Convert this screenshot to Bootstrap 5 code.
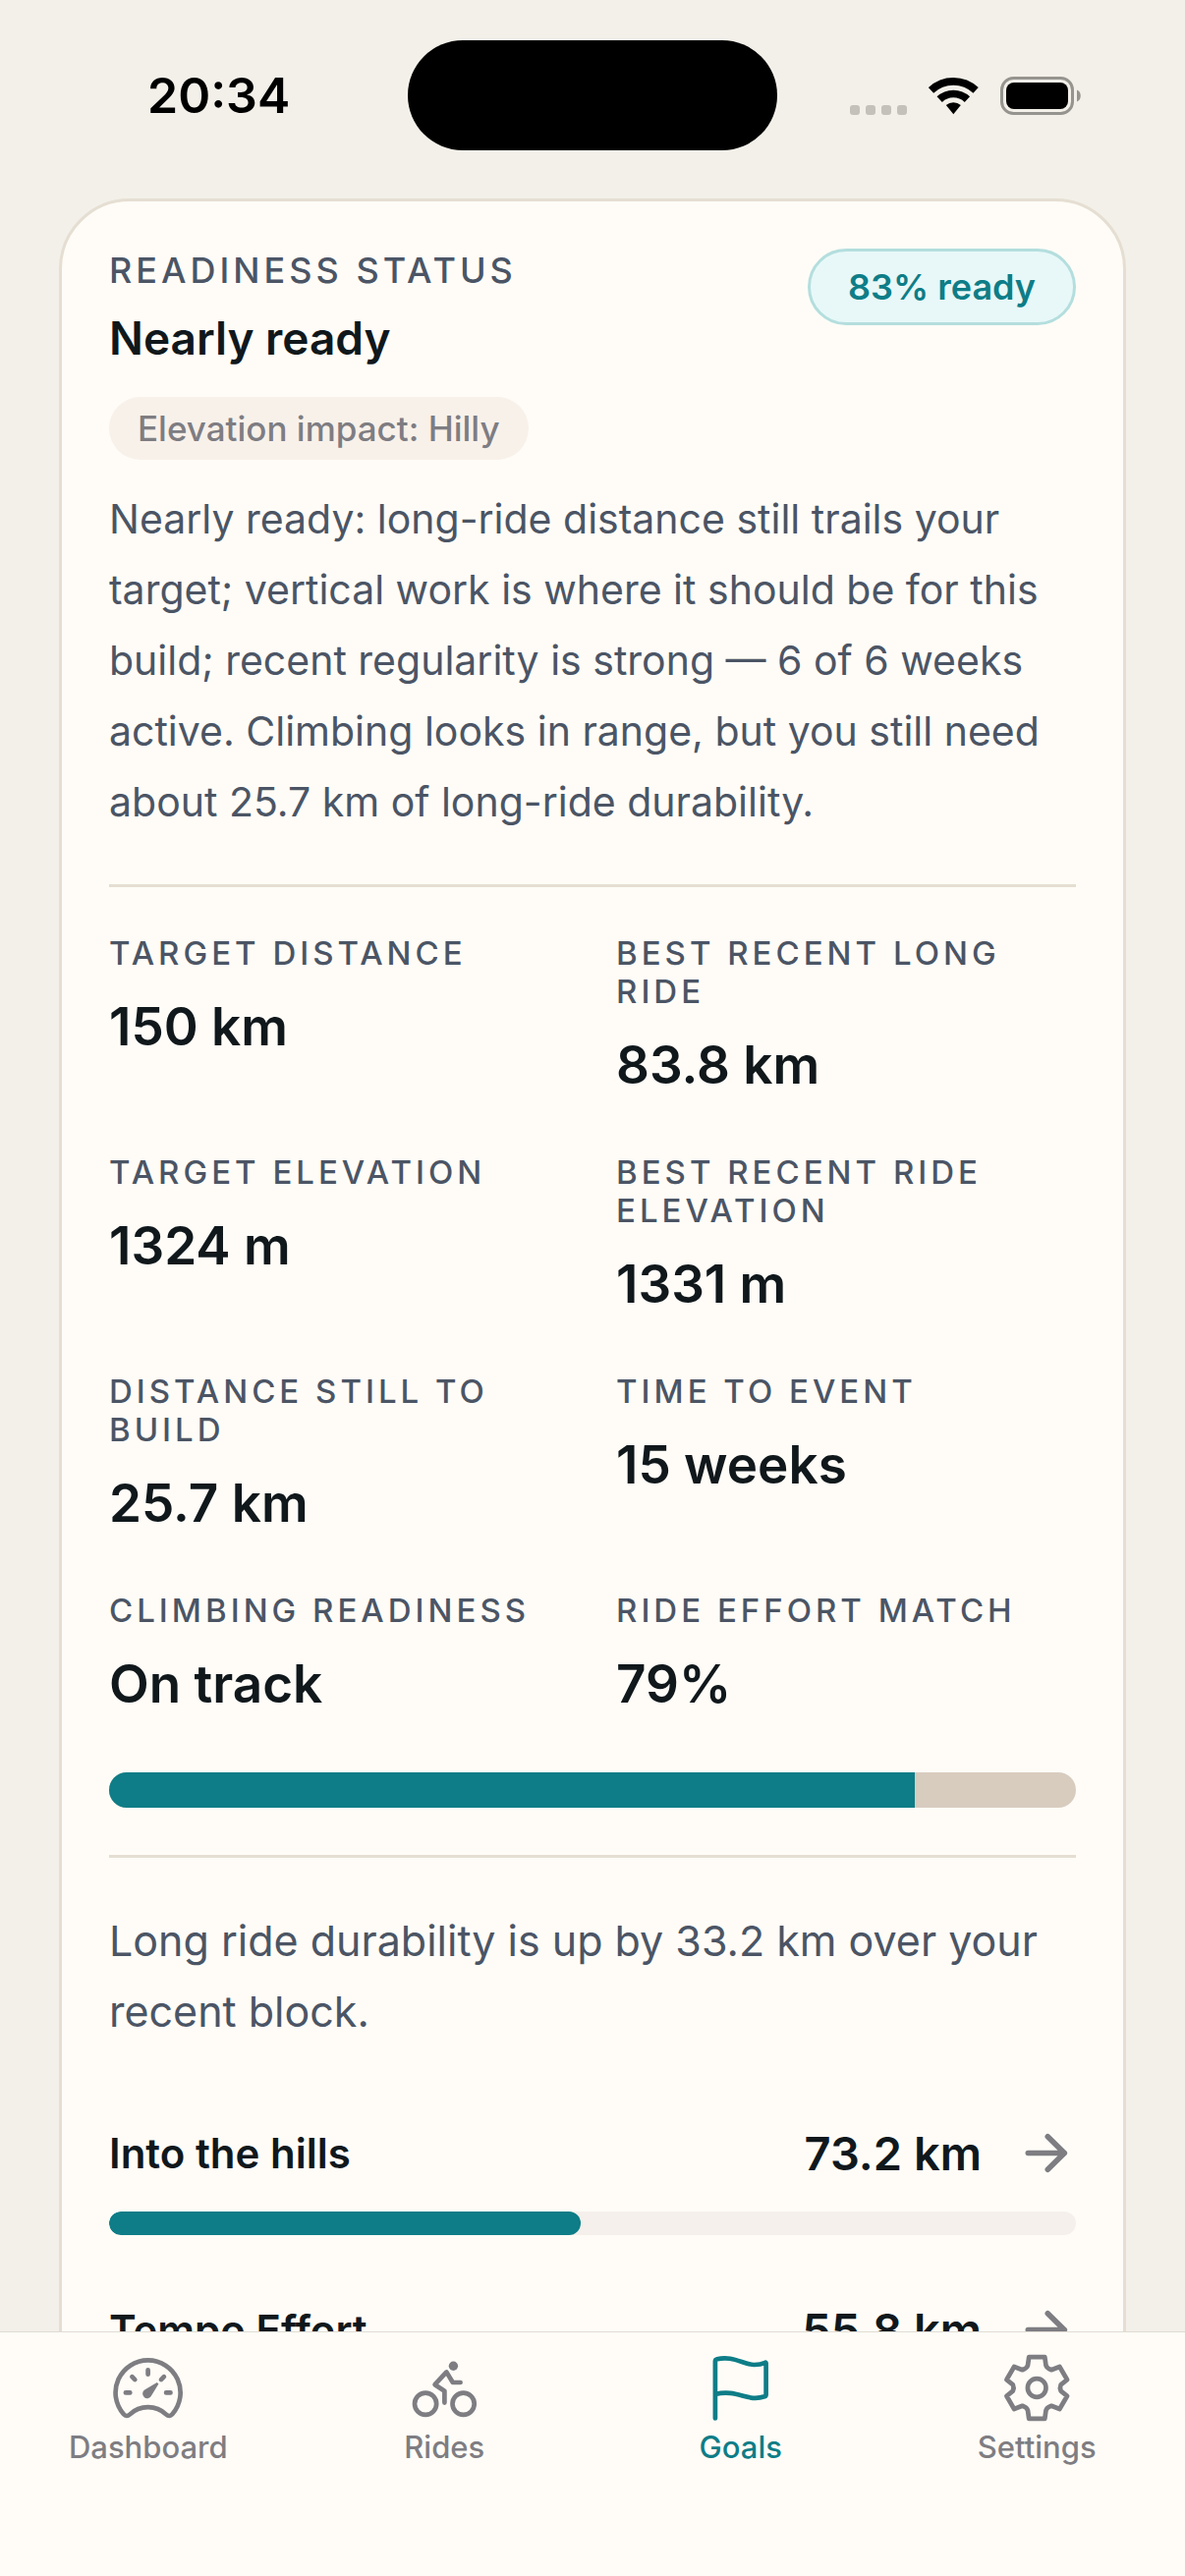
<!DOCTYPE html>
<html lang="en">
<head>
<meta charset="utf-8">
<meta name="viewport" content="width=device-width, initial-scale=1">
<title>Goals</title>
<link href="https://cdn.jsdelivr.net/npm/bootstrap@5.3.0/dist/css/bootstrap.min.css" rel="stylesheet">
<style>
:root{--sand:#f3f0e9;--paper:#fffcf7;--line:#e5ded2;--teal:#0e7d87;--ink:#10181c;--slate:#4b5565;--muted:#7e7d82}
body{font-family:Inter,"Liberation Sans",sans-serif;background:var(--sand);color:var(--ink)}
svg{display:block;flex:none}
.status-bar{padding:41px 106px 49px 150px}
.clock{font-size:50px;line-height:60px;font-weight:600;color:#000}
.island{width:376px;height:112px;background:#000;margin-left:-44px}
.signal{gap:22px}
.signal-dots{gap:6px;align-self:flex-end}
.signal-dots span{width:10px;height:10px;border-radius:3px;background:#c4c1bb}
.scroll-area{min-height:0;overflow-y:auto;scrollbar-width:none}
.scroll-area::-webkit-scrollbar{display:none}
.goal-card{--bs-card-bg:var(--paper);--bs-card-color:var(--ink);margin:0 60px 60px;border:3px solid var(--line);border-radius:72px}
.goal-card>.card-body{padding:48px}
.eyebrow{font-size:36px;line-height:45px;font-weight:500;letter-spacing:4px;color:var(--slate);text-transform:uppercase;margin-bottom:11px}
.goal-title{font-size:46px;line-height:71px;font-weight:600;margin:0}
.ready-pill{font-size:36px;line-height:42px;font-weight:600;color:var(--teal);background:#e8f8f8;border:3px solid #b4dede;padding:15px 38px}
.impact-pill{font-size:35px;line-height:40px;font-weight:500;color:var(--muted);background:#f8f1ea;padding:12px 29px}
.summary{font-size:41px;line-height:72px;color:var(--slate);margin:24px 0 0}
.rule{height:3px;border:0;background:var(--line);opacity:1;margin:48px 0}
.metrics{--bs-gutter-x:48px;--bs-gutter-y:52px;margin-bottom:52px}
.metric-label{font-size:33px;line-height:39px;font-weight:500;letter-spacing:4px;color:var(--slate);text-transform:uppercase;margin-bottom:18px}
.metric-value{font-size:53px;line-height:75px;font-weight:600;margin:0}
.progress{--bs-progress-bar-bg:var(--teal)}
.overall{--bs-progress-height:36px;--bs-progress-bg:#d8ccbf;border-radius:18px}
.insight{font-size:43px;line-height:72px;color:var(--slate);margin-bottom:74px}
.rides{gap:62px}
.ride-row{height:70px;gap:36px;color:var(--ink)}
.ride-name{font-size:42px;line-height:60px;font-weight:600}
.ride-km{font-size:47px;line-height:60px;font-weight:600}
.ride-bar{--bs-progress-height:24px;--bs-progress-bg:#f5f0eb;border-radius:12px;margin-top:24px}
.ride-bar .progress-bar{border-radius:12px}
.arrow{color:var(--muted)}
.tab-bar{background:var(--paper);border-top:1px solid #e0dcd5;padding:21px 0 112px}
.tab-bar .nav-link{padding:0;gap:5px;color:var(--muted);font-size:31px;line-height:38px;font-weight:500}
.tab-bar .nav-link.active{color:var(--teal)}
</style>
</head>
<body>
<div class="d-flex flex-column vh-100">

  <header class="status-bar d-flex align-items-center">
    <div class="clock flex-fill w-25">20:34</div>
    <div class="island rounded-pill flex-shrink-0"></div>
    <div class="signal d-flex align-items-center justify-content-end flex-fill w-25">
      <div class="signal-dots d-flex"><span></span><span></span><span></span><span></span></div>
      <svg width="51" height="39" viewBox="0 0 51 39" fill="none" stroke="#000" stroke-width="7.7" aria-label="Wi-Fi">
        <path d="M2.5 13.9A33.2 33.2 0 0 1 48.1 13.9M11.2 23.1A20.5 20.5 0 0 1 39.4 23.1"/>
        <path d="M25.3 38.2L17.8 29A11.7 11.7 0 0 1 32.8 29Z" fill="#000" stroke="none"/>
      </svg>
      <svg width="82" height="39" viewBox="0 0 82 39" aria-label="Battery">
        <rect x="1.5" y="1.5" width="72" height="36" rx="12" fill="none" stroke="#96948f" stroke-width="3"/>
        <rect x="6" y="6" width="63" height="27" rx="8"/>
        <path d="M78 13.5C83 15 83 24 78 25.5Z" fill="#96948f"/>
      </svg>
    </div>
  </header>

  <main class="scroll-area flex-grow-1">
    <section class="card goal-card">
      <div class="card-body">
        <div class="d-flex justify-content-between align-items-start">
          <div>
            <div class="eyebrow">Readiness status</div>
            <h1 class="goal-title">Nearly ready</h1>
          </div>
          <span class="ready-pill rounded-pill">83% ready</span>
        </div>
        <div class="d-flex mt-4"><span class="impact-pill rounded-pill">Elevation impact: Hilly</span></div>
        <p class="summary">Nearly ready: long-ride distance still trails your target; vertical work is where it should be for this build; recent regularity is strong — 6 of 6 weeks active. Climbing looks in range, but you still need about 25.7 km of long-ride durability.</p>

        <hr class="rule">

        <dl class="metrics row row-cols-2">
          <div class="col"><dt class="metric-label">Target distance</dt><dd class="metric-value">150 km</dd></div>
          <div class="col"><dt class="metric-label">Best recent long ride</dt><dd class="metric-value">83.8 km</dd></div>
          <div class="col"><dt class="metric-label">Target elevation</dt><dd class="metric-value">1324 m</dd></div>
          <div class="col"><dt class="metric-label">Best recent ride elevation</dt><dd class="metric-value">1331 m</dd></div>
          <div class="col"><dt class="metric-label">Distance still to build</dt><dd class="metric-value">25.7 km</dd></div>
          <div class="col"><dt class="metric-label">Time to event</dt><dd class="metric-value">15 weeks</dd></div>
          <div class="col"><dt class="metric-label">Climbing readiness</dt><dd class="metric-value">On track</dd></div>
          <div class="col"><dt class="metric-label">Ride effort match</dt><dd class="metric-value">79%</dd></div>
        </dl>

        <div class="progress overall" role="progressbar" aria-label="Readiness" aria-valuenow="83" aria-valuemin="0" aria-valuemax="100">
          <div class="progress-bar" style="width:83.3%"></div>
        </div>

        <hr class="rule">

        <p class="insight">Long ride durability is up by 33.2 km over your recent block.</p>

        <div class="rides d-flex flex-column">
          <div>
            <a href="#" class="ride-row d-flex align-items-center text-decoration-none">
              <span class="ride-name me-auto">Into the hills</span>
              <span class="ride-km">73.2 km</span>
              <svg class="arrow" width="60" height="60" viewBox="0 0 60 60" fill="none" stroke="currentColor" stroke-width="5.6" stroke-linecap="round" stroke-linejoin="round"><path d="M11.3 29.5H48.3M31.3 12.7L48.3 29.5L31.3 46.3"/></svg>
            </a>
            <div class="progress ride-bar" role="progressbar" aria-label="Into the hills" aria-valuenow="73.2" aria-valuemin="0" aria-valuemax="150">
              <div class="progress-bar" style="width:48.8%"></div>
            </div>
          </div>
          <div>
            <a href="#" class="ride-row d-flex align-items-center text-decoration-none">
              <span class="ride-name me-auto">Tempo Effort</span>
              <span class="ride-km">55.8 km</span>
              <svg class="arrow" width="60" height="60" viewBox="0 0 60 60" fill="none" stroke="currentColor" stroke-width="5.6" stroke-linecap="round" stroke-linejoin="round"><path d="M11.3 29.5H48.3M31.3 12.7L48.3 29.5L31.3 46.3"/></svg>
            </a>
            <div class="progress ride-bar" role="progressbar" aria-label="Tempo Effort" aria-valuenow="55.8" aria-valuemin="0" aria-valuemax="150">
              <div class="progress-bar" style="width:37.2%"></div>
            </div>
          </div>
        </div>
      </div>
    </section>
  </main>

  <nav class="tab-bar nav nav-justified flex-nowrap">
    <a class="nav-link nav-item d-flex flex-column align-items-center" href="#">
      <svg width="72" height="72" viewBox="0 0 72 72" fill="none" stroke="currentColor" stroke-width="4.7" stroke-linecap="round" stroke-linejoin="round">
        <path d="M35.6 7.4A33 33 0 0 0 10.8 62.2Q13.8 65.6 17 62.6A27 27 0 0 1 54.2 62.6Q57.4 65.6 60.4 62.2A33 33 0 0 0 35.6 7.4Z"/>
        <path d="M35.6 17.3V21.7M12.9 40.4H17.3M54.1 40.4H58.5M19.4 24.2L22.3 27.1M51.9 24.2L49 27.1"/>
        <path d="M44.8 29.9L46.4 31.4L39.2 43.2A4.7 4.7 0 1 1 32.2 37.6Z" fill="currentColor" stroke="none"/>
      </svg>
      <span>Dashboard</span>
    </a>
    <a class="nav-link nav-item d-flex flex-column align-items-center" href="#">
      <svg width="72" height="72" viewBox="0 0 72 72" fill="none" stroke="currentColor" stroke-width="4.7" stroke-linecap="round" stroke-linejoin="round">
        <circle cx="17.1" cy="51.7" r="11.1"/><circle cx="55.6" cy="51.7" r="11.1"/>
        <circle cx="45.4" cy="13.3" r="4.7" fill="currentColor" stroke="none"/>
        <path d="M52.6 30H44.8L38.4 19.4L26.6 32.2L36.4 38.8V50.6"/>
      </svg>
      <span>Rides</span>
    </a>
    <a class="nav-link nav-item active d-flex flex-column align-items-center" href="#" aria-current="page">
      <svg width="72" height="72" viewBox="0 0 72 72" fill="none" stroke="currentColor" stroke-width="4.7" stroke-linecap="round" stroke-linejoin="round">
        <path d="M9.9 66.4V8.6Q9.9 6.8 11.8 6.3C27 2.2 39 11.8 49.6 12Q56 12 60.8 9.8Q61.6 9.5 61.6 10.4V42.2Q61.6 43.8 60.2 44.3C42.5 50.5 33 36.5 9.9 42"/>
      </svg>
      <span>Goals</span>
    </a>
    <a class="nav-link nav-item d-flex flex-column align-items-center" href="#">
      <svg width="72" height="72" viewBox="0 0 72 72" fill="none" stroke="currentColor" stroke-width="4.7" stroke-linecap="round" stroke-linejoin="round">
        <path d="M28.2 4.2H44.3L45.5 12.6Q46.4 15.6 51 17.2L59.4 14L67.1 27.2L60.6 32.4Q59.2 35.5 60.6 38.6L67.1 43.8L59.4 57L51 53.8Q46.4 55.4 45.5 58.4L44.3 66.8H28.2L27 58.4Q26.1 55.4 21.5 53.8L13.1 57L5.4 43.8L11.9 38.6Q13.3 35.5 11.9 32.4L5.4 27.2L13.1 14L21.5 17.2Q26.1 15.6 27 12.6Z"/>
        <circle cx="36.2" cy="35.5" r="9.3"/>
      </svg>
      <span>Settings</span>
    </a>
  </nav>
</div>
<script src="https://cdn.jsdelivr.net/npm/bootstrap@5.3.0/dist/js/bootstrap.bundle.min.js"></script>
</body>
</html>
